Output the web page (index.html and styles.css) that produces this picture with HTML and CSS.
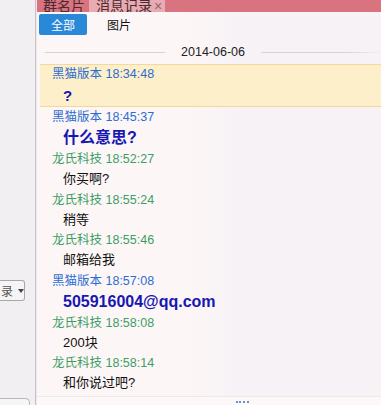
FILE: index.html
```html
<!DOCTYPE html>
<html>
<head>
    <title>消息记录</title>
    <link rel="stylesheet" href="styles.css">
</head>
<body>
    <div class="side">
        <div class="side-select"><span>录</span><i class="caret"></i></div>
        <div class="side-foot"></div>
    </div>
    <div class="main">
        <div class="tabs">
            <div class="tab">群名片</div>
            <div class="tab active">消息记录 <span class="close">×</span></div>
        </div>
        <div class="toolbar">
            <button class="filter on">全部</button>
            <button class="filter">图片</button>
        </div>
        <div class="date-row">
            <span class="date-line"></span>
            <span class="date">2014-06-06</span>
            <span class="date-line"></span>
        </div>
        <div class="msgs">
            <div class="msg hl">
                <div class="who blue">黑猫版本 18:34:48</div>
                <div class="text big">?</div>
            </div>
            <div class="msg">
                <div class="who blue">黑猫版本 18:45:37</div>
                <div class="text big">什么意思?</div>
            </div>
            <div class="msg">
                <div class="who green">龙氏科技 18:52:27</div>
                <div class="text">你买啊?</div>
            </div>
            <div class="msg">
                <div class="who green">龙氏科技 18:55:24</div>
                <div class="text">稍等</div>
            </div>
            <div class="msg">
                <div class="who green">龙氏科技 18:55:46</div>
                <div class="text">邮箱给我</div>
            </div>
            <div class="msg">
                <div class="who blue">黑猫版本 18:57:08</div>
                <div class="text big">505916004@qq.com</div>
            </div>
            <div class="msg">
                <div class="who green">龙氏科技 18:58:08</div>
                <div class="text">200块</div>
            </div>
            <div class="msg">
                <div class="who green">龙氏科技 18:58:14</div>
                <div class="text">和你说过吧?</div>
            </div>
        </div>
        <div class="foot">
            <span class="dots"></span>
        </div>
    </div>
</body>
</html>
```

FILE: styles.css
```css
body {
    margin: 0;
    width: 381px;
    height: 405px;
    overflow: hidden;
    display: flex;
    font-family: "Liberation Sans", "Noto Sans CJK SC", sans-serif;
    font-size: 12px;
    background-color: #f7f3f6;
}
.side {
    width: 35px;
    flex-shrink: 0;
    background-color: #f1eff1;
    border-right: 1px solid #c6c2c6;
    display: flex;
    flex-direction: column;
    overflow: hidden;
}
.side-select {
    margin-top: 280px;
    width: 24px;
    height: 19px;
    border: 1px solid #a9a7a9;
    border-left: none;
    border-radius: 0 3px 3px 0;
    background-color: #f6f5f6;
    display: flex;
    align-items: center;
    overflow: hidden;
    color: #555;
    font-size: 12px;
}
.side-select span {
    margin-left: 1px;
    white-space: nowrap;
}
.caret {
    margin-left: 5px;
    border-left: 3px solid transparent;
    border-right: 3px solid transparent;
    border-top: 4px solid #444;
}
.side-foot {
    margin-top: auto;
    height: 6px;
    width: 29px;
    border: 1px solid #b8b6b8;
    border-bottom: none;
    border-left: none;
    border-radius: 0 5px 0 0;
    background-color: #f7f6f7;
}
.main {
    flex: 1;
    display: flex;
    flex-direction: column;
    border-left: 1px solid #ebe7eb;
    background: linear-gradient(to right, #fdf6f6 0, #fdf6f6 150px, #f6f2f6 205px);
}
.tabs {
    height: 12px;
    flex-shrink: 0;
    background-color: #d8737f;
    display: flex;
    align-items: flex-end;
    overflow: hidden;
}
.tab {
    line-height: 16px;
    font-size: 14px;
    color: #4a2a30;
    padding: 0 4px 0 6px;
    margin-bottom: -2px;
    white-space: nowrap;
}
.tab.active {
    width: 61px;
    height: 12px;
    margin-bottom: 0;
    line-height: 12px;
    display: flex;
    align-items: flex-end;
    background-color: #e9aab2;
    padding: 0 8px 0 7px;
}
.close {
    color: #8a6a70;
    margin-left: 2px;
    font-size: 14px;
}
.toolbar {
    height: 21px;
    padding: 2px 0 0 2px;
    display: flex;
    align-items: center;
    gap: 8px;
}
.filter {
    height: 21px;
    padding: 0;
    border: none;
    border-radius: 2px;
    background: none;
    font-family: "Noto Sans CJK SC", sans-serif;
    font-size: 12px;
    color: #111;
    width: 48px;
    cursor: pointer;
}
.filter.on {
    background-color: #2a88d9;
    color: white;
}
.date-row {
    height: 24px;
    padding-top: 5px;
    display: flex;
    align-items: center;
}
.date-line {
    flex: 1;
    height: 1px;
    background-color: #d6d2dc;
    margin-left: 8px;
}
.date-line:last-child {
    margin-left: 0;
    background: linear-gradient(to right, #d6d2dc 70%, #f3eff3);
}
.date {
    color: #222;
    font-size: 12.5px;
    padding: 0 16px;
}
.msgs {
    padding-left: 3px;
    flex: 1;
}
.msg.hl {
    background-color: #fdefc9;
    border-top: 1px solid #f5d99c;
    border-bottom: 1px solid #f2d79c;
}
.msg.hl .who {
    line-height: 18px;
}
.msg.hl .text {
    padding-top: 3px;
    line-height: 20px;
}
.who {
    line-height: 20px;
    padding-left: 12px;
    font-size: 12.5px;
}
.blue {
    color: #2b6ed2;
}
.green {
    color: #3c9e68;
}
.text {
    padding-left: 23px;
    line-height: 20.5px;
    font-size: 13px;
    color: #111;
}
.text.big {
    font-size: 16px;
    font-weight: bold;
    line-height: 22px;
    color: #1717b2;
}
.msg.hl .text.big {
    font-size: 15px;
}
.foot {
    height: 8px;
    background-color: #fcf8f8;
    border-top: 1px solid #efe9ec;
    position: relative;
}
.dots {
    position: absolute;
    left: 199px;
    top: 4px;
    width: 13px;
    height: 4px;
    border-top: 2px dotted #6a8fcf;
}
```
